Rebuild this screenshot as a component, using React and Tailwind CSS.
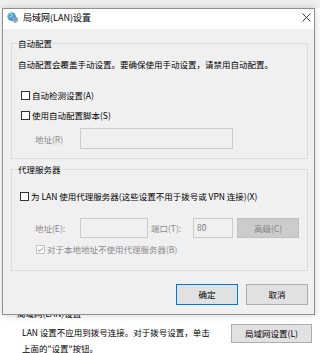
import React from 'react'

const font = "font-['Noto_Sans_CJK_SC','Microsoft_YaHei',sans-serif]"

function Box({ checked, disabled }) {
  return (
    <span
      className={`relative inline-block w-[9px] h-[9px] shrink-0 border bg-white ${disabled ? 'border-[#c4c4c4]' : 'border-[#333333]'}`}
    >
      {checked && (
        <svg viewBox="0 0 9 9" className="absolute -left-[1px] -top-[1px] w-[9px] h-[9px]">
          <path d="M1.8 4.6 L3.6 6.4 L7.2 2.4" fill="none" stroke={disabled ? '#b4b4b4' : '#333'} strokeWidth="1.1" />
        </svg>
      )}
    </span>
  )
}

function Check({ label, checked, disabled, className = '' }) {
  return (
    <div className={`flex items-center gap-[2px] h-[14px] ${className}`}>
      <Box checked={checked} disabled={disabled} />
      <span className={`leading-[14px] ${disabled ? 'text-[#8a8a8a]' : 'text-black'}`}>{label}</span>
    </div>
  )
}

function Group({ title, className = '', children }) {
  return (
    <div className={`relative ml-[8px] w-[297px] border border-[#dcdcdc] ${className}`}>
      <span className="absolute -top-[7px] left-[5px] px-[1px] bg-[#f0f0f0] leading-[12px] text-black">{title}</span>
      {children}
    </div>
  )
}

function Field({ className = '', children }) {
  return (
    <div className={`h-[20px] border border-[#cccccc] bg-[#f0f0f0] pl-[3px] leading-[17px] text-[#7a7a7a] ${className}`}>
      {children}
    </div>
  )
}

function Globe() {
  return (
    <svg viewBox="0 0 12 12" className="w-[11px] h-[11px]">
      <defs>
        <radialGradient id="g" cx="0.35" cy="0.3" r="0.8">
          <stop offset="0" stopColor="#9fd3ff" />
          <stop offset="1" stopColor="#1d6fc4" />
        </radialGradient>
      </defs>
      <circle cx="5" cy="5" r="4.6" fill="url(#g)" />
      <path d="M2.2 2.6 C3.4 2 4.6 2.6 4.2 3.8 C3.8 4.8 2.6 4.6 2.4 5.8 C1.4 5 1.4 3.6 2.2 2.6 Z" fill="#4caf50" />
      <path d="M5.6 1.2 C7 1.2 8.6 2.4 8.4 3.6 C7.4 3.4 6.6 2.6 5.6 1.2 Z" fill="#4caf50" />
      <rect x="6.4" y="6.2" width="5.2" height="4" fill="#e8e8e8" stroke="#777" strokeWidth="0.6" />
      <rect x="7.2" y="7" width="3.6" height="2.4" fill="#3a8fd8" />
      <rect x="7.8" y="10.4" width="2.4" height="1.2" fill="#888" />
    </svg>
  )
}

export default function App() {
  return (
    <div className={`relative w-[320px] h-[353px] overflow-hidden bg-white text-[8.5px] ${font}`}>
      {/* parent window behind the dialog */}
      <div className="h-[8px] bg-[#f0f0f0]" />
      <div className="pt-[299px] pl-[17px] leading-[12px] text-black">局域网(LAN)设置</div>
      <div className="flex items-start mt-[5px]">
        <div className="pl-[22px] w-[231px] leading-[16px] text-black">
          LAN 设置不应用到拨号连接。对于拨号设置，单击
          <br />
          上面的"设置"按钮。
        </div>
        <button className="w-[81px] h-[19px] border border-[#adadad] bg-[#e1e1e1] text-black leading-[17px]">
          局域网设置(L)
        </button>
      </div>

      {/* dialog */}
      <div className="absolute left-[2px] top-[8px] w-[313px] h-[307px] border border-[#8f8f8f] bg-[#f0f0f0] shadow-[0_0_8px_rgba(0,0,0,0.18)] flex flex-col">
        <div className="h-[20px] bg-white flex items-start pt-[3px] pl-[4px] pr-[3px]">
          <Globe />
          <span className="ml-[5px] text-[9px] leading-[11px] text-black">局域网(LAN)设置</span>
          <svg viewBox="0 0 9 9" className="ml-auto mt-[1px] w-[9px] h-[9px]">
            <path d="M0.5 0.5 L8.5 8.5 M8.5 0.5 L0.5 8.5" stroke="#222" strokeWidth="0.9" />
          </svg>
        </div>

        <Group title="自动配置" className="mt-[14px] h-[116px]">
          <div className="pt-[14px] pl-[6px] leading-[12px] text-black">
            自动配置会覆盖手动设置。要确保使用手动设置，请禁用自动配置。
          </div>
          <Check label="自动检测设置(A)" className="mt-[18px] ml-[9px]" />
          <Check label="使用自动配置脚本(S)" className="mt-[6px] ml-[9px]" />
          <div className="flex items-center mt-[6px] h-[21px]">
            <span className="pl-[23px] w-[68px] text-[#8a8a8a] leading-[12px]">地址(R)</span>
            <Field className="w-[153px] h-[21px]" />
          </div>
        </Group>

        <Group title="代理服务器" className="mt-[10px] h-[102px]">
          <Check label="为 LAN 使用代理服务器(这些设置不用于拨号或 VPN 连接)(X)" className="mt-[19px] ml-[8px]" />
          <div className="flex items-center mt-[15px] h-[20px]">
            <span className="pl-[23px] w-[68px] text-[#8a8a8a] leading-[12px]">地址(E):</span>
            <Field className="w-[68px]" />
            <span className="ml-[3px] w-[42px] text-[#8a8a8a] leading-[12px]">端口(T):</span>
            <Field className="w-[40px]">80</Field>
            <div className="ml-[4px] w-[62px] h-[20px] border border-[#bfbfbf] bg-[#cccccc] text-[#838383] leading-[18px] text-center">
              高级(C)
            </div>
          </div>
          <Check label="对于本地地址不使用代理服务器(B)" checked disabled className="mt-[4px] ml-[24px]" />
        </Group>

        <div className="flex justify-end gap-[8px] pr-[6px] mt-[13px]">
          <button className="w-[62px] h-[21px] border border-[#0078d7] bg-[#e1e1e1] text-black leading-[19px]">确定</button>
          <button className="w-[62px] h-[21px] border border-[#adadad] bg-[#e1e1e1] text-black leading-[19px]">取消</button>
        </div>
      </div>
    </div>
  )
}
